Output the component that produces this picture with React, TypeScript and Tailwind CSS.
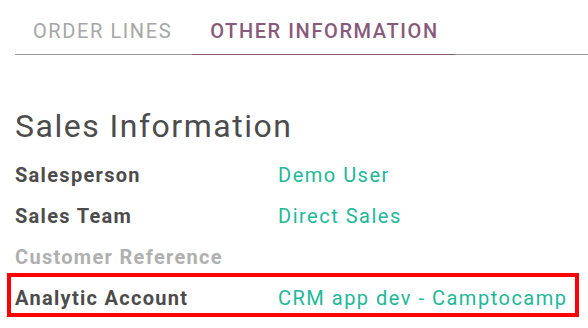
import React from 'react'

const rows = [
  { label: 'Salesperson', value: 'Demo User' },
  { label: 'Sales Team', value: 'Direct Sales' },
  { label: 'Customer Reference', value: '', muted: true },
]

export default function App() {
  return (
    <div className="w-[588px] h-[328px] bg-white overflow-hidden font-['Roboto',sans-serif]">
      <div className="pt-2 pl-[15px]">
        <ul className="flex border-b border-[#9b9b9b]">
          <li className="pl-[18px] pr-4 py-2 mr-1 text-[20px] leading-[30px] tracking-[1.6px] text-[#a6a6a6] -mb-px">ORDER LINES</li>
          <li className="pl-[18px] pr-4 py-2 text-[20px] leading-[30px] tracking-[1.6px] font-medium text-[#875a7b] border-b border-[#875a7b] -mb-px">OTHER INFORMATION</li>
        </ul>
      </div>

      <div className="pl-[15px] pr-[17px] pt-[51px]">
        <h2 className="text-[32px] leading-[40px] tracking-[1.5px] text-[#4c4c4c]">Sales Information</h2>
        <div className="mt-[9px]">
          {rows.map((r) => (
            <div key={r.label} className="grid grid-cols-[263px_1fr] text-[20px] leading-[41px] tracking-[1.3px]">
              <div className={r.muted ? 'font-bold text-[#b0b0b0]' : 'font-bold text-[#4c4c4c]'}>{r.label}</div>
              <div className="text-[#21b799] tracking-[1.5px]">{r.value}</div>
            </div>
          ))}
          <div className="-mx-2 -mt-[5px] border-4 border-[#ff0000] px-1 pt-[7px] pb-[1px]">
            <div className="grid grid-cols-[263px_1fr] text-[20px] leading-[28px] tracking-[1.3px]">
              <div className="font-bold text-[#4c4c4c]">Analytic Account</div>
              <div className="text-[#21b799] whitespace-nowrap tracking-[1.5px]">CRM app dev - Camptocamp</div>
            </div>
          </div>
        </div>
      </div>
    </div>
  )
}
